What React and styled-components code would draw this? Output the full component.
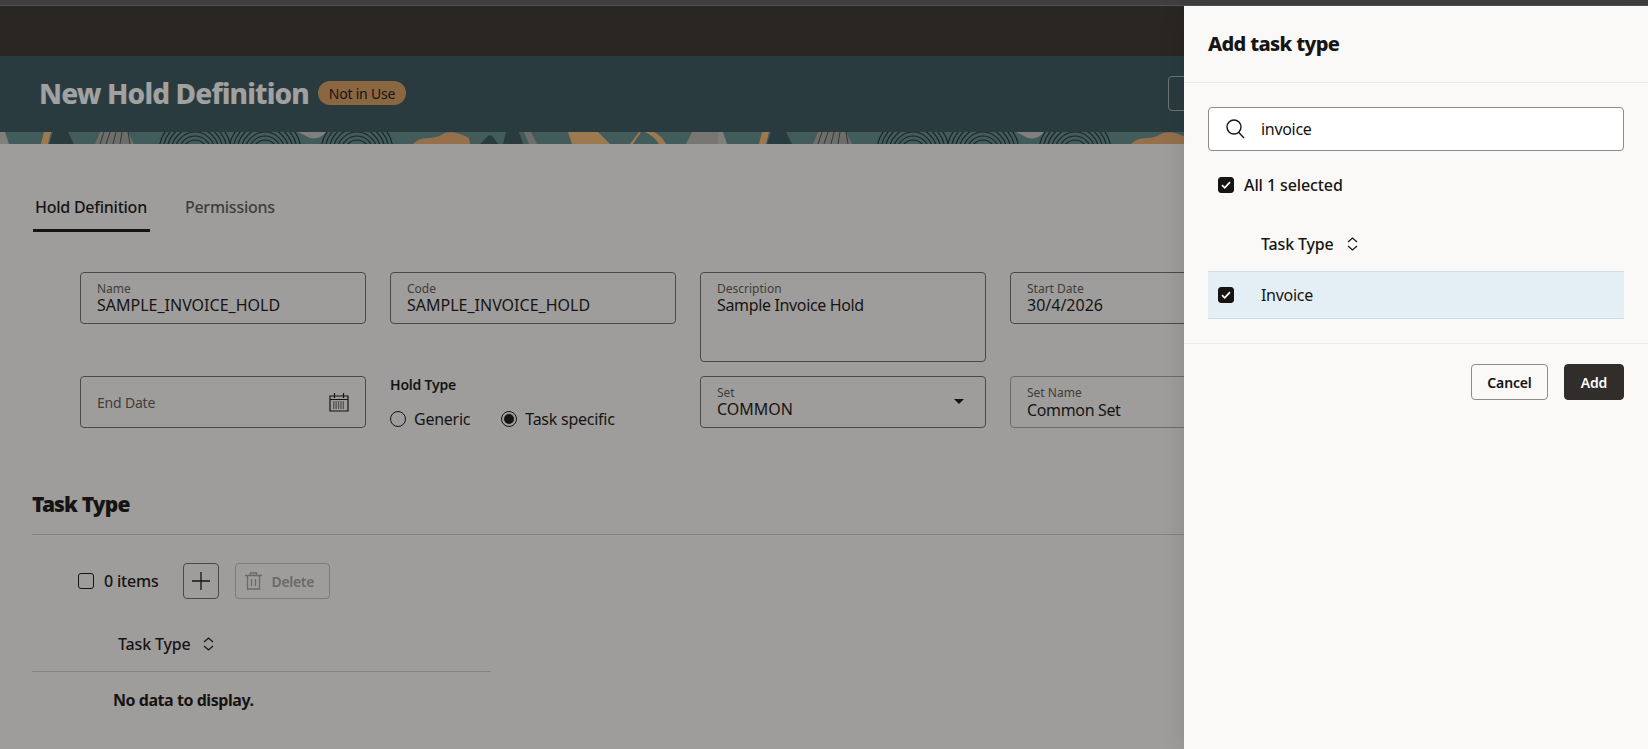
import React from "react"
import styled, { createGlobalStyle } from "styled-components"

const GlobalStyle = createGlobalStyle`
  html, body {
    margin: 0;
    padding: 0;
    background: #fbf9f8;
  }
  body {
    font-family: "Noto Sans", "Open Sans", sans-serif;
    color: #161513;
  }
  * {
    box-sizing: border-box;
  }
`

const Page = styled.div`
  position: relative;
  width: 1648px;
  height: 749px;
  overflow: hidden;
  background: #faf8f6;
`

const TopStrip = styled.div`
  height: 6px;
  background: #5c5c5c;
  border-bottom: 1px solid #7d7d7d;
`

const DarkBar = styled.div`
  height: 50px;
  background: #37322e;
`

const TitleBar = styled.header`
  display: flex;
  align-items: center;
  gap: 9px;
  height: 76px;
  padding: 0 0 2px 39px;
  background: #37555c;
`

const PageTitle = styled.h1`
  margin: 0;
  font-size: 28px;
  line-height: 36px;
  font-weight: 800;
  color: #fff;
  letter-spacing: -0.85px;
`

const Badge = styled.span`
  display: inline-flex;
  align-items: center;
  justify-content: center;
  width: 88px;
  height: 24px;
  border-radius: 12px;
  background: #d89e5f;
  font-size: 14px;
  color: #161513;
  letter-spacing: -0.2px;
`

const GhostButton = styled.div`
  width: 60px;
  height: 35px;
  margin-left: auto;
  margin-right: 420px;
  border: 1px solid #a9b4b6;
  border-radius: 4px;
`

const Band = styled.svg`
  display: block;
  width: 100%;
  height: 12px;
`

const Tabs = styled.nav`
  display: flex;
  gap: 33px;
  margin: 51px 0 0 33px;
`

const Tab = styled.div`
  padding: 0 3px 10px 2px;
  font-size: 16px;
  line-height: 24px;
  font-weight: 500;
  letter-spacing: -0.25px;
  color: ${p => (p.$active ? "#161513" : "#5c5a57")};
  border-bottom: 3px solid ${p => (p.$active ? "#161513" : "transparent")};
`

const FormGrid = styled.section`
  display: grid;
  grid-template-columns: repeat(4, 286px);
  grid-template-rows: 90px 52px;
  gap: 14px 24px;
  margin: 40px 0 0 80px;
`

const Field = styled.div`
  position: relative;
  height: ${p => p.$height || 52}px;
  padding: 9px 16px 0;
  border: 1px solid ${p => (p.$readonly ? "#a9a7a4" : "#6f6d6a")};
  border-radius: 4px;
`

const FieldLabel = styled.div`
  font-size: 12px;
  line-height: 14px;
  color: #5c5a57;
`

const FieldValue = styled.div`
  font-size: 16px;
  line-height: 18px;
  color: #161513;
  letter-spacing: ${p => (p.$tight ? "-0.35px" : "0")};
  margin-top: ${p => p.$shift || 0}px;
`

const Placeholder = styled.div`
  font-size: 14px;
  line-height: 52px;
  margin-top: -9px;
  color: #5c5a57;
  letter-spacing: -0.2px;
`

const FieldIcon = styled.span`
  position: absolute;
  top: ${p => p.$top}px;
  right: ${p => p.$right}px;
  display: flex;
`

const Group = styled.div`
  padding-top: 1px;
`

const GroupLabel = styled.div`
  font-size: 14px;
  line-height: 16px;
  font-weight: 600;
  letter-spacing: -0.2px;
`

const RadioRow = styled.div`
  display: flex;
  gap: 31px;
  margin-top: 14px;
`

const RadioItem = styled.label`
  display: flex;
  align-items: center;
  gap: 8px;
  font-size: 16px;
  line-height: 24px;
  letter-spacing: -0.25px;
`

const RadioCircle = styled.span`
  display: flex;
  align-items: center;
  justify-content: center;
  width: 16px;
  height: 16px;
  border: 1px solid #161513;
  border-radius: 50%;
  &::after {
    content: "";
    display: ${p => (p.$checked ? "block" : "none")};
    width: 10px;
    height: 10px;
    border-radius: 50%;
    background: #161513;
  }
`

const SectionTitle = styled.h2`
  margin: 62px 0 0 32px;
  padding-bottom: 16px;
  border-bottom: 1px solid #cfcdca;
  font-size: 21px;
  line-height: 28px;
  font-weight: 900;
  letter-spacing: -0.85px;
`

const Toolbar = styled.div`
  display: flex;
  align-items: center;
  height: 36px;
  margin: 28px 0 0 78px;
`

const Box = styled.span`
  display: flex;
  align-items: center;
  justify-content: center;
  flex: none;
  width: 16px;
  height: 16px;
  border-radius: 3px;
  border: 1px solid #161513;
  background: ${p => (p.$checked ? "#161513" : "transparent")};
`

const ItemCount = styled.span`
  margin: 0 25px 0 10px;
  font-size: 16px;
  line-height: 24px;
  font-weight: 500;
  letter-spacing: -0.2px;
`

const IconButton = styled.div`
  display: flex;
  align-items: center;
  justify-content: center;
  width: 36px;
  height: 36px;
  margin-right: 16px;
  border: 1px solid #6f6d6a;
  border-radius: 4px;
`

const DisabledButton = styled.div`
  display: flex;
  align-items: center;
  gap: 9px;
  width: 95px;
  height: 36px;
  padding-left: 9px;
  border: 1px solid #c4c2bf;
  border-radius: 4px;
  font-size: 14px;
  font-weight: 600;
  letter-spacing: -0.3px;
  color: #a5a3a0;
`

const Table = styled.div`
  width: 459px;
  margin: 33px 0 0 32px;
`

const ColumnHeader = styled.div`
  display: flex;
  align-items: center;
  gap: ${p => p.$gap}px;
  padding: 0 0 15px ${p => p.$left}px;
  font-size: 16px;
  line-height: 24px;
  font-weight: 500;
  letter-spacing: -0.15px;
  ${p => p.$rule && "border-bottom: 1px solid #cfcdca;"}
`

const NoData = styled.div`
  margin-top: 16px;
  padding-left: 81px;
  font-size: 16px;
  line-height: 24px;
  font-weight: 700;
  letter-spacing: -0.45px;
`

const Scrim = styled.div`
  position: absolute;
  inset: 0;
  background: rgba(22, 21, 19, 0.4);
`

const Drawer = styled.aside`
  position: absolute;
  top: 6px;
  right: 0;
  bottom: 0;
  width: 464px;
  background: #fbf9f8;
  box-shadow: 0 0 24px rgba(0, 0, 0, 0.12);
`

const DrawerHeader = styled.div`
  height: 77px;
  padding: 25px 24px 0;
  border-bottom: 1px solid #eeecea;
  font-size: 20px;
  line-height: 26px;
  font-weight: 800;
  letter-spacing: -0.65px;
`

const DrawerBody = styled.div`
  padding: 24px 24px 0;
  height: 261px;
  border-bottom: 1px solid #eeecea;
`

const Search = styled.div`
  display: flex;
  align-items: center;
  gap: 16px;
  height: 44px;
  padding-left: 17px;
  background: #fff;
  border: 1px solid #8d8b88;
  border-radius: 4px;
  font-size: 16px;
  letter-spacing: -0.3px;
`

const SelectAll = styled.div`
  display: flex;
  align-items: center;
  gap: 10px;
  margin-top: 22px;
  padding-left: 10px;
  font-size: 16px;
  line-height: 24px;
  font-weight: 500;
  letter-spacing: -0.1px;
`

const Row = styled.div`
  display: flex;
  align-items: center;
  gap: 27px;
  height: 48px;
  padding-left: 10px;
  background: #e4eff5;
  border-top: 1px solid #cfdce3;
  border-bottom: 1px solid #cfdce3;
  font-size: 16px;
  letter-spacing: -0.3px;
`

const DrawerHead = styled.div`
  margin-top: 35px;
`

const DrawerFooter = styled.div`
  display: flex;
  justify-content: flex-end;
  gap: 16px;
  padding: 20px 24px;
`

const FooterButton = styled.div`
  display: flex;
  align-items: center;
  justify-content: center;
  width: ${p => p.$width}px;
  height: 36px;
  border-radius: 4px;
  font-size: 14px;
  font-weight: 600;
  letter-spacing: -0.15px;
  border: 1px solid ${p => (p.$primary ? "#312d2a" : "#8d8b88")};
  background: ${p => (p.$primary ? "#312d2a" : "transparent")};
  color: ${p => (p.$primary ? "#fff" : "#161513")};
`

const Check = () => (
  <svg width="10" height="8" viewBox="0 0 10 8" fill="none">
    <path d="M1 4.2 3.7 6.8 9 1.2" stroke="#fff" strokeWidth="1.7" />
  </svg>
)

const SortIcon = () => (
  <svg width="11" height="14" viewBox="0 0 11 14" fill="none" stroke="#161513" strokeWidth="1.2">
    <path d="M1 5 5.5 1 10 5M1 9l4.5 4L10 9" />
  </svg>
)

const CalendarIcon = () => (
  <svg width="20" height="19" viewBox="0 0 20 19" fill="none" stroke="#161513">
    <path d="M1 3h18v15H1zM1 6.5h18M5.5 0v5M14.5 0v5" strokeWidth="1.2" />
    <path d="M4 9h12M4 11h12M4 13h12M4 15h12" strokeWidth="1.2" strokeDasharray="1.4 1" />
  </svg>
)

const CaretIcon = () => (
  <svg width="10" height="5" viewBox="0 0 10 5">
    <path d="M0 0h10L5 5z" fill="#161513" />
  </svg>
)

const PlusIcon = () => (
  <svg width="18" height="18" viewBox="0 0 18 18" stroke="#161513" strokeWidth="1.3">
    <path d="M9 0v18M0 9h18" />
  </svg>
)

const TrashIcon = () => (
  <svg width="17" height="18" viewBox="0 0 17 18" fill="none" stroke="#a5a3a0" strokeWidth="1.3">
    <path d="M0 3.5h17M5.5 3.5V1h6v2.5M2.5 3.5V17h12V3.5M6.5 7v7M10.5 7v7" />
  </svg>
)

const SearchIcon = () => (
  <svg width="19" height="20" viewBox="0 0 19 20" fill="none" stroke="#161513" strokeWidth="1.4">
    <circle cx="8" cy="8" r="7" />
    <path d="M12.8 13.5 18 19" />
  </svg>
)

const rings = [12, 16, 20, 24, 28, 32, 36]

const PatternBand = () => (
  <Band aria-hidden="true">
    <defs>
      <pattern id="band" width="718" height="12" patternUnits="userSpaceOnUse">
        <rect width="718" height="12" fill="#5f8c8a" />
        <path d="M0 0h5l4 12H0z" fill="#c8c6c1" />
        <path d="M44 0h7l-3 12h-7z" fill="#f7bd78" />
        <path d="M53 0h15l6 12H49z" fill="#37555c" />
        <path d="M100 0h28l6 12H95z" fill="#a9a8a3" />
        <path d="M104 0 100 12M110 0l-4 12M116 0l-3 12M122 0l-2 12M128 0l2 12" stroke="#37555c" strokeWidth="1" />
        {[195, 265, 357].map(cx =>
          rings.map(r => (
            <circle key={cx + "-" + r} cx={cx} cy="20" r={r} fill="none" stroke="#1f3236" strokeWidth="1.2" />
          ))
        )}
        <path d="M298 0h28q-6 8-16 6z" fill="#c8c6c1" />
        <path d="M413 12q6-7 18-6 8-1 14-5 10-3 24 5l1 6z" fill="#e9ad6f" />
        <path d="M480 12l8-8q3-2 6 2l4 6z" fill="#37555c" />
        <path d="M506 0h13l4 12H503z" fill="#37555c" />
        <path d="M524 0h7l6 12h-8z" fill="#a9a8a3" />
        <path d="M568 0h30l12 12h-38z" fill="#f7bd78" />
        <path d="M630 12l9-12h2l-8 12zM645 0h9q8 4 12 12h-7q-5-8-14-12z" fill="#f7bd78" />
        <path d="M692 0h34l4 12h-44z" fill="#bab8b3" />
      </pattern>
    </defs>
    <rect width="100%" height="12" fill="url(#band)" />
  </Band>
)

const App = () => (
  <Page>
    <GlobalStyle />
    <TopStrip />
    <DarkBar />
    <TitleBar>
      <PageTitle>New Hold Definition</PageTitle>
      <Badge>Not in Use</Badge>
      <GhostButton />
    </TitleBar>
    <PatternBand />

    <Tabs>
      <Tab $active>Hold Definition</Tab>
      <Tab>Permissions</Tab>
    </Tabs>

    <FormGrid>
      <Field>
        <FieldLabel>Name</FieldLabel>
        <FieldValue>SAMPLE_INVOICE_HOLD</FieldValue>
      </Field>
      <Field>
        <FieldLabel>Code</FieldLabel>
        <FieldValue>SAMPLE_INVOICE_HOLD</FieldValue>
      </Field>
      <Field $height={90}>
        <FieldLabel>Description</FieldLabel>
        <FieldValue $tight>Sample Invoice Hold</FieldValue>
      </Field>
      <Field>
        <FieldLabel>Start Date</FieldLabel>
        <FieldValue>30/4/2026</FieldValue>
      </Field>
      <Field>
        <Placeholder>End Date</Placeholder>
        <FieldIcon $top={16} $right={16}>
          <CalendarIcon />
        </FieldIcon>
      </Field>
      <Group>
        <GroupLabel>Hold Type</GroupLabel>
        <RadioRow>
          <RadioItem>
            <RadioCircle />
            Generic
          </RadioItem>
          <RadioItem>
            <RadioCircle $checked />
            Task specific
          </RadioItem>
        </RadioRow>
      </Group>
      <Field>
        <FieldLabel>Set</FieldLabel>
        <FieldValue>COMMON</FieldValue>
        <FieldIcon $top={22} $right={21}>
          <CaretIcon />
        </FieldIcon>
      </Field>
      <Field $readonly>
        <FieldLabel>Set Name</FieldLabel>
        <FieldValue $tight $shift={1}>Common Set</FieldValue>
      </Field>
    </FormGrid>

    <SectionTitle>Task Type</SectionTitle>
    <Toolbar>
      <Box />
      <ItemCount>0 items</ItemCount>
      <IconButton>
        <PlusIcon />
      </IconButton>
      <DisabledButton>
        <TrashIcon />
        Delete
      </DisabledButton>
    </Toolbar>
    <Table>
      <ColumnHeader $left={86} $gap={12} $rule>
        Task Type
        <SortIcon />
      </ColumnHeader>
      <NoData>No data to display.</NoData>
    </Table>

    <Scrim />

    <Drawer>
      <DrawerHeader>Add task type</DrawerHeader>
      <DrawerBody>
        <Search>
          <SearchIcon />
          invoice
        </Search>
        <SelectAll>
          <Box $checked>
            <Check />
          </Box>
          All 1 selected
        </SelectAll>
        <DrawerHead>
          <ColumnHeader $left={53} $gap={13}>
            Task Type
            <SortIcon />
          </ColumnHeader>
        </DrawerHead>
        <Row>
          <Box $checked>
            <Check />
          </Box>
          Invoice
        </Row>
      </DrawerBody>
      <DrawerFooter>
        <FooterButton $width={77}>Cancel</FooterButton>
        <FooterButton $width={60} $primary>
          Add
        </FooterButton>
      </DrawerFooter>
    </Drawer>
  </Page>
)

export default App
